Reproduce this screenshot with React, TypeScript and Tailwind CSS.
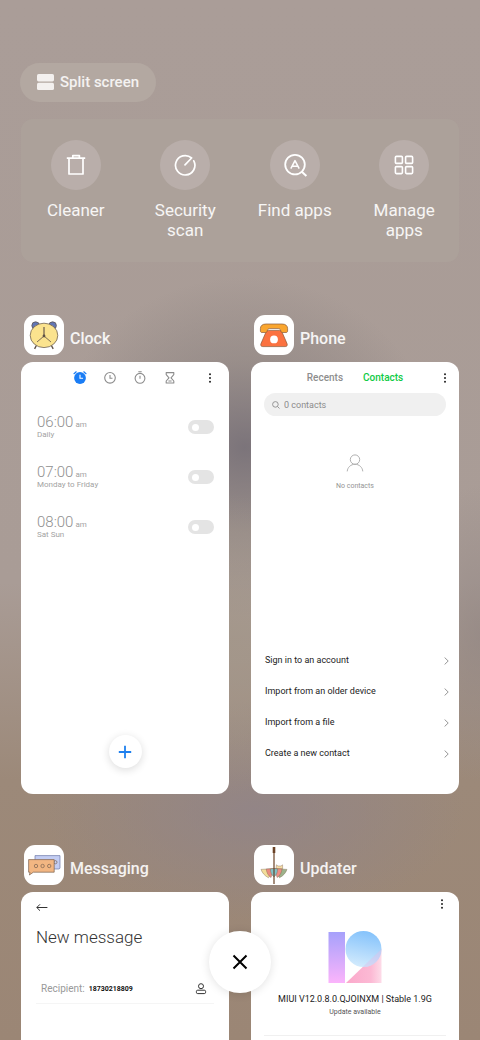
import type { ReactNode } from "react";

interface Alarm {
  id: string;
  time: string;
  repeat: string;
}

const alarms: Alarm[] = [
  { id: "alarm-6", time: "06:00", repeat: "Daily" },
  { id: "alarm-7", time: "07:00", repeat: "Monday to Friday" },
  { id: "alarm-8", time: "08:00", repeat: "Sat Sun" },
];

const contactActions = [
  "Sign in to an account",
  "Import from an older device",
  "Import from a file",
  "Create a new contact",
];

/* ---------- Tool icons ---------- */

function TrashIcon() {
  return (
    <svg viewBox="0 0 24 24" className="size-6" fill="none" stroke="white" strokeWidth="1.7" strokeLinejoin="round">
      <path d="M2.8 5.2h18.4M8.8 5V2.6h6.6V5" />
      <path d="M5 5.4V21h14V5.4" />
    </svg>
  );
}

function ScanIcon() {
  return (
    <svg viewBox="0 0 24 24" className="size-6" fill="none" stroke="white" strokeWidth="1.7" strokeLinecap="round">
      <path d="M20.8 7.8A9.7 9.7 0 1 1 18.6 5L12 11.8" strokeLinejoin="round" />
    </svg>
  );
}

function FindIcon() {
  return (
    <svg viewBox="0 0 24 24" className="size-6 overflow-visible" fill="none" stroke="white" strokeWidth="1.8">
      <circle cx="12" cy="11.6" r="9.8" />
      <path d="M18.8 18.8l4.6 4.2" strokeWidth="2" />
      <path d="M7.8 15.6L12 7.6l4.2 8M9.6 13.2h4.8" strokeWidth="1.5" strokeLinejoin="round" />
    </svg>
  );
}

function GridIcon() {
  return (
    <svg viewBox="0 0 24 24" className="size-6" fill="none" stroke="white" strokeWidth="1.6">
      <rect x="3.4" y="3.4" width="7" height="7" rx="1" />
      <rect x="13.6" y="3.4" width="7" height="7" rx="1" />
      <rect x="3.4" y="13.6" width="7" height="7" rx="1" />
      <rect x="13.6" y="13.6" width="7" height="7" rx="1" />
    </svg>
  );
}

const tools: { label: string; icon: ReactNode }[] = [
  { label: "Cleaner", icon: <TrashIcon /> },
  { label: "Security scan", icon: <ScanIcon /> },
  { label: "Find apps", icon: <FindIcon /> },
  { label: "Manage apps", icon: <GridIcon /> },
];

/* ---------- App icons ---------- */

function ClockAppIcon() {
  return (
    <svg viewBox="0 0 40 40" className="size-full" stroke="#5d5046" strokeWidth="0.7">
      <circle cx="11.6" cy="10.6" r="3.8" fill="#6276b5" />
      <circle cx="28.6" cy="10.6" r="3.8" fill="#6276b5" />
      <path d="M12.4 30.5l-1.8 3.4M27.4 30.5l1.8 3.4" strokeWidth="1.4" />
      <ellipse cx="20" cy="20.4" rx="13.8" ry="12.2" fill="#fbe38e" />
      <path d="M20 12v9" strokeWidth="1.1" />
      <path d="M20 21l-7 6M20 21l7 6" strokeWidth="0.8" />
      <circle cx="20" cy="21" r="1.4" fill="#5d5046" stroke="none" />
    </svg>
  );
}

function PhoneAppIcon() {
  return (
    <svg viewBox="0 0 40 40" className="size-full" stroke="#8a5a3a" strokeWidth="0.7" strokeLinejoin="round">
      <path
        d="M14.6 15.4h10.8c1.2 0 2 .5 2.6 1.6l5 11.6c.7 1.8 0 3-1.8 3H8.8c-1.8 0-2.5-1.2-1.8-3l5-11.6c.6-1.1 1.4-1.6 2.6-1.6z"
        fill="#fb7240"
      />
      <path
        d="M12 9h16c3.6 0 5.6 1.8 5.6 4.6V16c0 .9-.6 1.5-1.5 1.5h-3.8c-.9 0-1.3-.6-1.5-1.5-.3-1.7-1-2.4-2.6-2.4h-8.4c-1.6 0-2.3.7-2.6 2.4-.2.9-.6 1.5-1.5 1.5H7.900c-.9 0-1.500-.6-1.500-1.500v-2.400C6.400 10.800 8.400 9 12 9z"
        fill="#faa62f"
      />
      <circle cx="20" cy="24.4" r="3.9" fill="white" stroke="none" />
    </svg>
  );
}

function MessagingAppIcon() {
  return (
    <svg viewBox="0 0 40 40" className="size-full" stroke="#7a6250" strokeWidth="0.7" strokeLinejoin="round">
      <path d="M11 10.6h25v12.6l-1 .8H11z" fill="#c3cdf3" stroke="#6e78a8" />
      <circle cx="31.4" cy="17.2" r="1.6" fill="none" />
      <path d="M4.6 14.6h25.6v12.6H9.4l-4 2.8.6-2.8H4.6z" fill="#f2b682" />
      <g fill="none">
        <circle cx="12" cy="21" r="1.7" />
        <circle cx="18.6" cy="21" r="1.7" />
        <circle cx="25.2" cy="21" r="1.7" />
      </g>
    </svg>
  );
}

function UpdaterAppIcon() {
  return (
    <svg viewBox="0 0 40 40" className="size-full" stroke="#7d6450" strokeWidth="0.4" strokeLinejoin="round">
      <path d="M22 24l.4-4.2 1.6 1.2h3l1.6-1.2V24z" fill="#f6dda6" />
      <path d="M20 23.6L7 24.4c1.2 3.6 3.8 6.4 7.5 8.400z" fill="#f3dd9a" />
      <path d="M20 23.6l-7.800.4c.4 3.600 2 6.800 4.800 8.600z" fill="#e98b80" />
      <path d="M20 23.600l13 .8c-1.200 3.600-3.800 6.400-7.500 8.400z" fill="#9db38b" />
      <path d="M20 23.600l8 .4c-.4 3.600-2 6.800-4.800 8.600z" fill="#ee8d84" />
      <path d="M20 23.400l-3.600.6c0 3.400 1.200 6 3.600 8 2.400-2 3.600-4.600 3.600-8z" fill="#82c2c8" />
      <path d="M20 8v31" stroke="#6b4226" strokeWidth="1.2" />
      <path d="M20 2v6" stroke="#6b4226" strokeWidth="2.6" />
    </svg>
  );
}

/* ---------- Small shared pieces ---------- */

function MoreButton() {
  return (
    <button type="button" aria-label="More options" className="flex h-3 w-2 items-center justify-center">
      <svg viewBox="0 0 8 12" className="h-3 w-2" fill="#222">
        <circle cx="4" cy="2.2" r="1" />
        <circle cx="4" cy="6" r="1" />
        <circle cx="4" cy="9.8" r="1" />
      </svg>
    </button>
  );
}

interface RecentAppProps {
  name: string;
  icon: ReactNode;
  children: ReactNode;
}

function RecentApp({ name, icon, children }: RecentAppProps) {
  return (
    <article className="flex flex-col gap-[7px]">
      <header className="flex h-10 items-center gap-1.5 pl-[3px]">
        <div className="size-10 overflow-hidden rounded-[11px] bg-white">{icon}</div>
        <h2 className="pt-2 text-base leading-6 font-medium text-white/90">{name}</h2>
      </header>
      <div className="flex aspect-[208/432] flex-col overflow-hidden rounded-xl bg-white">{children}</div>
    </article>
  );
}

/* ---------- App previews ---------- */

function ClockPreview() {
  return (
    <>
      <nav className="grid grid-cols-[1fr_auto_1fr] items-center px-[15px] pt-2">
        <div className="col-start-2 flex gap-3.5 text-[#8c8c8c]">
          <button type="button" aria-label="Alarm">
            <svg viewBox="0 0 16 16" className="size-4" fill="none" strokeLinecap="round">
              <circle cx="8" cy="8" r="5.9" fill="#1a7df5" />
              <path d="M2 3.7l2.2-1.900M14 3.700l-2.200-1.900" stroke="#1a7df5" strokeWidth="1.2" />
              <path d="M8 5.1v3.2h2.6" stroke="white" strokeWidth="1.1" />
            </svg>
          </button>
          <button type="button" aria-label="World clock">
            <svg viewBox="0 0 16 16" className="size-4" fill="none" stroke="currentColor" strokeWidth="1.1">
              <circle cx="8" cy="7.8" r="5.3" />
              <path d="M8 4.9v3.3h2.5" />
            </svg>
          </button>
          <button type="button" aria-label="Stopwatch">
            <svg viewBox="0 0 16 16" className="size-4" fill="none" stroke="currentColor" strokeWidth="1.1">
              <circle cx="8" cy="8.3" r="4.9" />
              <path d="M6.3 1.8h3.4M8 5.7v3" />
            </svg>
          </button>
          <button type="button" aria-label="Timer">
            <svg viewBox="0 0 16 16" className="size-4" fill="none" stroke="currentColor" strokeWidth="1.1" strokeLinejoin="round">
              <path d="M4.2 2.600h7.600v2L9 7.800l2.800 3.200v2H4.200v-2L7 7.800 4.200 4.600z" />
              <path d="M6.4 11h3.2" />
            </svg>
          </button>
        </div>
        <div className="justify-self-end">
          <MoreButton />
        </div>
      </nav>

      <ul className="flex flex-col pt-7 pr-[15px] pl-4 text-[#a3a3a3]">
        {alarms.map((alarm) => (
          <li key={alarm.id} className="flex h-[50px] items-start justify-between">
            <label htmlFor={alarm.id} className="flex flex-col">
              <span className="flex h-4 items-baseline gap-0.5 text-[15px] leading-4 font-light text-[#8f8f8f]">
                {alarm.time}
                <span className="text-[8px] leading-none font-normal text-[#a3a3a3]">am</span>
              </span>
              <span className="text-[8px] leading-2.5">{alarm.repeat}</span>
            </label>
            <input
              id={alarm.id}
              type="checkbox"
              role="switch"
              className="mt-1.5 flex h-3.5 w-[26px] appearance-none items-center rounded-full bg-[#e4e4e4] px-1 before:size-[7px] before:rounded-full before:bg-white checked:justify-end checked:bg-[#1a7df5]"
            />
          </li>
        ))}
      </ul>

      <div className="mt-auto flex justify-center pb-[26px]">
        <button
          type="button"
          aria-label="Add alarm"
          className="flex size-[33px] items-center justify-center rounded-full bg-white shadow-[0_2px_8px_rgba(0,0,0,0.14)]"
        >
          <svg viewBox="0 0 14 14" className="size-3.5" stroke="#1f80ee" strokeWidth="1.8">
            <path d="M7 .8v12.4M.8 7h12.4" />
          </svg>
        </button>
      </div>
    </>
  );
}

function PhonePreview() {
  return (
    <>
      <nav className="grid grid-cols-[1fr_auto_1fr] items-center px-2.5 pt-2">
        <div className="col-start-2 flex gap-5 text-[10px] leading-4 font-medium">
          <button type="button" className="text-[#8e8e8e]">Recents</button>
          <button type="button" className="text-[#10cb45]">Contacts</button>
        </div>
        <div className="justify-self-end">
          <MoreButton />
        </div>
      </nav>

      <label className="mx-[13px] mt-[7px] flex h-[23px] items-center gap-1 rounded-full bg-[#f0f0f0] px-2">
        <svg viewBox="0 0 8 8" className="size-2 shrink-0" fill="none" stroke="#8c8c8c" strokeWidth="0.9">
          <circle cx="3.4" cy="3.4" r="2.8" />
          <path d="M5.5 5.5l2 2" />
        </svg>
        <input
          type="search"
          aria-label="Search contacts"
          placeholder="0 contacts"
          className="w-full min-w-0 bg-transparent text-[9px] leading-4 outline-none placeholder:text-[#8c8c8c]"
        />
      </label>

      <div className="flex flex-col items-center gap-2 pt-[38px]">
        <svg viewBox="0 0 18 18" className="size-[18px]" fill="none" stroke="#b0b0b0" strokeWidth="1">
          <circle cx="9" cy="5.6" r="4.7" />
          <path d="M1.2 17.4c.4-4.2 3.6-7.100 7.800-7.100s7.400 2.900 7.800 7.100" />
        </svg>
        <p className="text-[7px] leading-3 text-[#949494]">No contacts</p>
      </div>

      <ul className="mt-auto pr-2.5 pb-[25px] pl-3.5">
        {contactActions.map((action) => (
          <li key={action}>
            <button type="button" className="flex h-[31px] w-full items-center justify-between text-[9px] text-[#222]">
              {action}
              <svg viewBox="0 0 5 8" className="h-2 w-[5px]" fill="none" stroke="#8a8a8a" strokeWidth="0.9">
                <path d="M.6.5L4.2 4 .6 7.5" />
              </svg>
            </button>
          </li>
        ))}
      </ul>
    </>
  );
}

function MessagingPreview() {
  return (
    <div className="flex flex-col px-[15px] pt-[9px]">
      <button type="button" aria-label="Back" className="w-3">
        <svg viewBox="0 0 12 12" className="size-3" fill="none" stroke="#333" strokeWidth="1">
          <path d="M11.4 6.5H.8M4 3.3L.8 6.5 4 9.7" />
        </svg>
      </button>
      <h3 className="mt-3 text-[17px] leading-6 font-light text-[#333]">New message</h3>
      <div className="mt-[25px] flex h-[30px] items-center border-b border-[#f5f5f5] pr-[7px] pl-[5px]">
        <label htmlFor="recipient" className="mr-1 text-[10px] text-[#999]">Recipient:</label>
        <input
          id="recipient"
          type="tel"
          defaultValue="18730218809"
          className="min-w-0 flex-1 bg-transparent text-[7px] leading-4 font-bold text-[#111] outline-none"
        />
        <button type="button" aria-label="Choose contact">
          <svg viewBox="0 0 12 12" className="size-3" fill="none" stroke="#333" strokeWidth="1">
            <circle cx="6" cy="3.2" r="2.5" />
            <rect x="1.4" y="7.2" width="9.2" height="3.4" rx="1.3" />
          </svg>
        </button>
      </div>
    </div>
  );
}

function UpdaterPreview() {
  return (
    <div className="flex flex-col px-[13px] pt-1.5 text-center">
      <div className="flex justify-end">
        <MoreButton />
      </div>
      <svg viewBox="0 0 54 53" className="mx-auto mt-5 h-[53px] w-[54px]" role="img" aria-label="MIUI 12">
        <defs>
          <linearGradient id="bar" x1="0" y1="0" x2="0" y2="1">
            <stop offset="0" stopColor="#a6a1fb" />
            <stop offset="1" stopColor="#fbb4fb" />
          </linearGradient>
          <linearGradient id="ball" x1="0.6" y1="0" x2="0.4" y2="1">
            <stop offset="0" stopColor="#84c2fb" />
            <stop offset="1" stopColor="#d3ebfd" />
          </linearGradient>
          <linearGradient id="wedge" x1="0" y1="0" x2="1" y2="0">
            <stop offset="0" stopColor="#fba9cb" />
            <stop offset="0.7" stopColor="#fcb9d4" />
            <stop offset="1" stopColor="#fddbe8" />
          </linearGradient>
          <clipPath id="overlap">
            <circle cx="35.5" cy="19" r="18" />
          </clipPath>
        </defs>
        <rect x="0.5" y="2" width="16.5" height="51" fill="url(#bar)" />
        <path d="M18 53L53.5 19v34z" fill="url(#wedge)" />
        <circle cx="35.5" cy="19" r="18" fill="url(#ball)" />
        <path d="M18 53L53.5 19v34z" fill="#d9c4ec" opacity="0.5" clipPath="url(#overlap)" />
      </svg>
      <p className="mt-2 text-[9px] leading-4 whitespace-nowrap text-[#222]">MIUI V12.0.8.0.QJOINXM | Stable 1.9G</p>
      <p className="text-[7px] leading-2.5 text-[#555]">Update available</p>
      <hr className="mt-[18px] border-[#f0f0f0]" />
    </div>
  );
}

export default function App() {
  return (
    <main className="relative h-screen overflow-hidden bg-[radial-gradient(ellipse_110px_150px_at_48%_62%,#a3978acc,transparent),radial-gradient(ellipse_190px_170px_at_51%_43%,#787178ee,#8a817f88_50%,transparent),radial-gradient(ellipse_210px_110px_at_53%_78%,#90848acc,transparent),radial-gradient(ellipse_70px_150px_at_100%_61%,#8f848299,transparent),linear-gradient(to_bottom,#aa9d98_0%,#a99c96_56%,#9c8979_75%,#9b8675_100%)] px-[21px] pt-[63px] font-[Roboto,sans-serif]">
      <button
        type="button"
        className="-ml-px flex h-[39px] items-center gap-1.5 rounded-full bg-[#b3a8a1] px-[17px] text-[15px] font-medium text-white/85"
      >
        <svg viewBox="0 0 17 17" className="size-[17px]" fill="#f3f0ee">
          <rect x="0" y="0" width="17" height="7.4" rx="1.6" />
          <rect x="0" y="8.7" width="17" height="7.4" rx="1.6" />
        </svg>
        Split screen
      </button>

      <section
        aria-label="Tools"
        className="mt-[17px] grid h-[143px] grid-cols-4 items-start rounded-xl bg-[#ada29b]/80 pt-[21px]"
      >
        {tools.map((tool) => (
          <button key={tool.label} type="button" className="flex flex-col items-center gap-2.5 px-4">
            <span className="flex size-[50px] items-center justify-center rounded-full bg-[#b9aeaa]">{tool.icon}</span>
            <span className="text-[17px] leading-5 text-white/90">{tool.label}</span>
          </button>
        ))}
      </section>

      {/* Recent apps */}
      <section aria-label="Recent apps" className="mt-[53px] grid grid-cols-2 gap-x-[22px] gap-y-[51px]">
        <RecentApp name="Clock" icon={<ClockAppIcon />}>
          <ClockPreview />
        </RecentApp>
        <RecentApp name="Phone" icon={<PhoneAppIcon />}>
          <PhonePreview />
        </RecentApp>
        <RecentApp name="Messaging" icon={<MessagingAppIcon />}>
          <MessagingPreview />
        </RecentApp>
        <RecentApp name="Updater" icon={<UpdaterAppIcon />}>
          <UpdaterPreview />
        </RecentApp>
      </section>

      <button
        type="button"
        aria-label="Close all"
        className="absolute bottom-[47px] left-1/2 flex size-[62px] -translate-x-1/2 items-center justify-center rounded-full bg-white shadow-[0_1px_10px_rgba(0,0,0,0.12)]"
      >
        <svg viewBox="0 0 16 16" className="size-4" stroke="black" strokeWidth="2">
          <path d="M1.5 1.5l13 13M14.5 1.5l-13 13" />
        </svg>
      </button>
    </main>
  );
}
